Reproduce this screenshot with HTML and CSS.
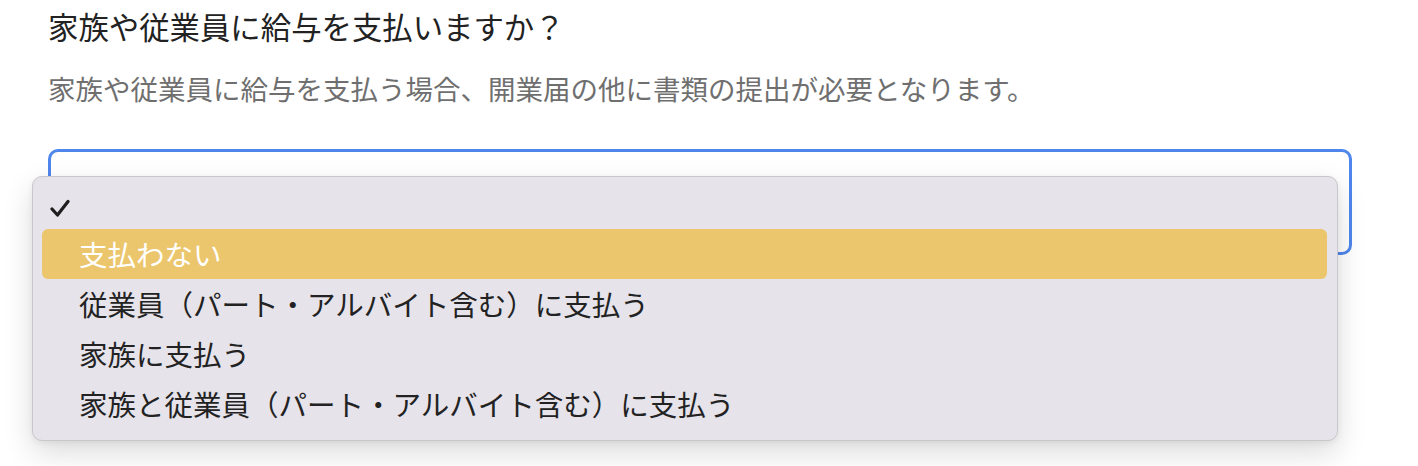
FILE: index.html
```html
<!DOCTYPE html>
<html lang="ja">
<head>
<meta charset="utf-8">
<link rel="stylesheet" href="styles.css">
</head>
<body>
<main class="page">
  <h1 class="title">家族や従業員に給与を支払いますか？</h1>
  <p class="desc">家族や従業員に給与を支払う場合、開業届の他に書類の提出が必要となります。</p>
  <div class="select"></div>
</main>
<ul class="menu">
  <li class="item item-check">
    <svg class="check" width="20" height="19" viewBox="0 0 20 19"><path d="M2 10 L7.5 16 L18 2.5" fill="none" stroke="#1e1e1e" stroke-width="3.2" stroke-linecap="round" stroke-linejoin="round"/></svg>
  </li>
  <li class="item active">支払わない</li>
  <li class="item">従業員（パート・アルバイト含む）に支払う</li>
  <li class="item">家族に支払う</li>
  <li class="item">家族と従業員（パート・アルバイト含む）に支払う</li>
</ul>
</body>
</html>
```
FILE: styles.css
```css
* { box-sizing: border-box; }
html, body {
  margin: 0;
  padding: 0;
  background: #ffffff;
  width: 1418px;
  height: 466px;
  overflow: hidden;
  font-family: "Noto Sans CJK JP", "Noto Sans", sans-serif;
}
.page {
  padding: 8px 66px 0 48px;
}
.title {
  margin: 0;
  font-size: 30.4px;
  font-weight: 400;
  line-height: 36px;
  color: #222222;
}
.desc {
  margin: 26px 0 0;
  font-size: 27.5px;
  line-height: 36px;
  color: #6f6f6f;
}
.select {
  margin-top: 43px;
  width: 1304px;
  height: 106px;
  border: 3px solid #4f86ec;
  border-radius: 10px;
  background: #ffffff;
}
.menu {
  position: absolute;
  left: 32px;
  top: 176px;
  width: 1306px;
  height: 265px;
  margin: 0;
  padding: 2px 10px 0 9px;
  list-style: none;
  background: #e6e3ea;
  border: 1px solid #c9c7cc;
  border-radius: 10px;
  box-shadow: 0 12px 30px rgba(0, 0, 0, 0.14), 0 2px 6px rgba(0, 0, 0, 0.06);
}
.item {
  height: 50px;
  display: flex;
  align-items: center;
  padding-left: 37px;
  padding-bottom: 2px;
  font-size: 28.5px;
  color: #222222;
  border-radius: 6px;
}
.item-check {
  padding-left: 8px;
  padding-top: 8px;
  padding-bottom: 0;
}
.check {
  display: block;
}
.active {
  background: #ebc66c;
  color: #ffffff;
}
```
